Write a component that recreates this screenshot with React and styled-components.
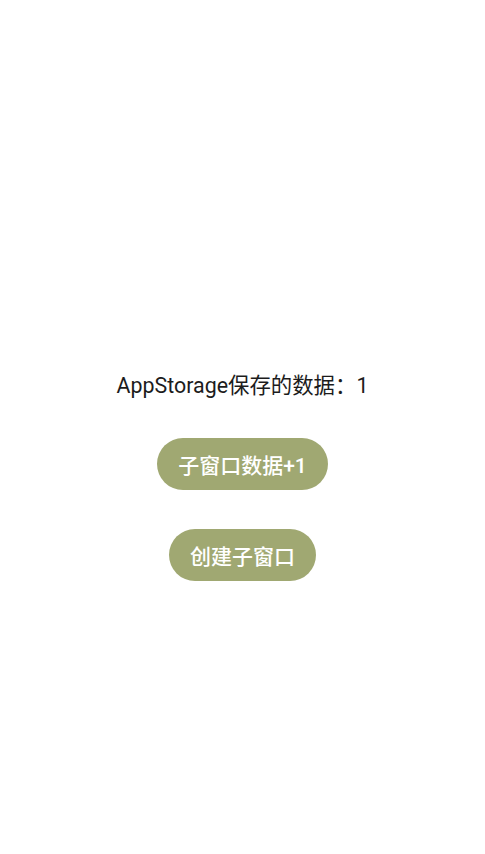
import React from "react";
import styled, { createGlobalStyle } from "styled-components";

const Global = createGlobalStyle`
  html, body { margin: 0; padding: 0; background: #ffffff; }
  body { font-family: Roboto, "Noto Sans CJK SC", sans-serif; }
`;

const Page = styled.div`
  width: 485px;
  height: 854px;
  display: flex;
  flex-direction: column;
  align-items: center;
  padding-top: 371px;
  box-sizing: border-box;
`;

const Label = styled.div`
  font-family: Roboto, "Noto Sans CJK SC", sans-serif;
  font-size: 21.4px;
  line-height: 30px;
  color: #1c1c1c;
  font-weight: 400;
`;

const Button = styled.button`
  margin-top: ${(p) => p.$mt}px;
  height: 52px;
  padding: 0 21px;
  border: none;
  border-radius: 26px;
  background: #a0a872;
  color: #ffffff;
  font-family: Roboto, "Noto Sans CJK SC", sans-serif;
  font-size: 21px;
  font-weight: 500;
  display: flex;
  align-items: center;
  justify-content: center;
`;

export default function App() {
  return (
    <>
      <Global />
      <Page>
        <Label>AppStorage保存的数据：1</Label>
        <Button $mt={37}>子窗口数据+1</Button>
        <Button $mt={39}>创建子窗口</Button>
      </Page>
    </>
  );
}
